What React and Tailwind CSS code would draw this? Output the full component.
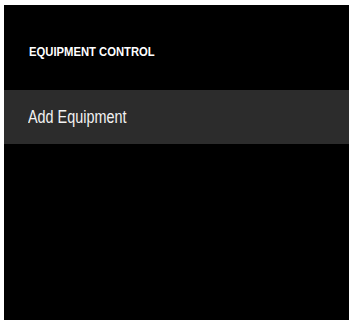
import React from 'react';

export default function App() {
  return (
    <div className="w-[351px] h-[320px] bg-white pt-[5px] pl-[4px] pr-[2px] overflow-hidden">
      <div className="h-[315px] bg-black flex flex-col" style={{ fontFamily: '"Liberation Sans", Arial, sans-serif' }}>
        {/* Header */}
        <div className="h-[85px] flex items-center pl-[25px] pt-[10px]">
          <span className="text-[12.5px] font-bold text-white scale-x-[0.9] origin-left inline-block whitespace-nowrap">
            EQUIPMENT CONTROL
          </span>
        </div>

        {/* Row */}
        <div className="h-[54px] bg-[#2c2c2c] flex items-center pl-[24px]">
          <span className="text-[18px] text-[#f2f2f2] scale-x-[0.8] origin-left inline-block whitespace-nowrap">
            Add Equipment
          </span>
        </div>
      </div>
    </div>
  );
}
